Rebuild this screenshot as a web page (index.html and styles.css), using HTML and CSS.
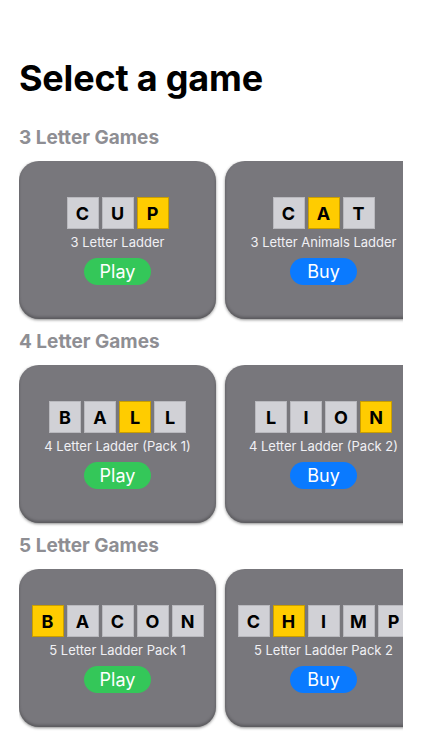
FILE: index.html
```html
<!DOCTYPE html>
<html lang="en">
<head>
  <meta charset="UTF-8">
  <title>Select a game</title>
  <link rel="stylesheet" href="styles.css">
</head>
<body>

  <main class="page">
    <h1>Select a game</h1>

    <section class="group">
      <h2>3 Letter Games</h2>
      <div class="shelf">
        <div class="card">
          <div class="word">
            <span class="tile">C</span><span class="tile">U</span><span class="tile hit">P</span>
          </div>
          <p class="name">3 Letter Ladder</p>
          <button class="btn play">Play</button>
        </div>
        <div class="card">
          <div class="word">
            <span class="tile">C</span><span class="tile hit">A</span><span class="tile">T</span>
          </div>
          <p class="name">3 Letter Animals Ladder</p>
          <button class="btn buy">Buy</button>
        </div>
      </div>
    </section>

    <section class="group">
      <h2>4 Letter Games</h2>
      <div class="shelf">
        <div class="card">
          <div class="word">
            <span class="tile">B</span><span class="tile">A</span><span class="tile hit">L</span><span class="tile">L</span>
          </div>
          <p class="name">4 Letter Ladder (Pack 1)</p>
          <button class="btn play">Play</button>
        </div>
        <div class="card">
          <div class="word">
            <span class="tile">L</span><span class="tile">I</span><span class="tile">O</span><span class="tile hit">N</span>
          </div>
          <p class="name">4 Letter Ladder (Pack 2)</p>
          <button class="btn buy">Buy</button>
        </div>
      </div>
    </section>

    <section class="group">
      <h2>5 Letter Games</h2>
      <div class="shelf">
        <div class="card">
          <div class="word">
            <span class="tile hit">B</span><span class="tile">A</span><span class="tile">C</span><span class="tile">O</span><span class="tile">N</span>
          </div>
          <p class="name">5 Letter Ladder Pack 1</p>
          <button class="btn play">Play</button>
        </div>
        <div class="card">
          <div class="word">
            <span class="tile">C</span><span class="tile hit">H</span><span class="tile">I</span><span class="tile">M</span><span class="tile">P</span>
          </div>
          <p class="name">5 Letter Ladder Pack 2</p>
          <button class="btn buy">Buy</button>
        </div>
      </div>
    </section>
  </main>

</body>
</html>
```

FILE: styles.css
```css
body { font-family: Inter, "Liberation Sans", sans-serif; background: white; margin: 0; padding: 0; }
.page { padding: 57px 19px 0 19px; }

h1 {
  margin: 0 0 25px 0;
  font-size: 36px;
  line-height: 43px;
  font-weight: 700;
  color: black;
  letter-spacing: -0.2px;
}

.group { margin-bottom: 6px; }
.group h2 {
  margin: 0 0 12px 0;
  padding-top: 2px;
  font-size: 19px;
  line-height: 22px;
  font-weight: 700;
  color: #8e8e93;
}

/* horizontal row of cards, cut off on the right */
.shelf {
  display: flex;
  gap: 9px;
  overflow: hidden;
  height: 162px;
}

.card {
  flex: 0 0 197px;
  height: 158px;
  box-sizing: border-box;
  background: #78777c;
  border-radius: 20px;
  display: flex;
  flex-direction: column;
  align-items: center;
  justify-content: center;
  padding-top: 2px;
  box-shadow: inset 0 -2px 3px rgba(0,0,0,0.25), 0 1px 3px rgba(0,0,0,0.45);
}

.word { display: flex; gap: 3px; }
.tile {
  width: 32px;
  height: 32px;
  box-sizing: border-box;
  display: flex;
  align-items: center;
  justify-content: center;
  background: #d1d1d6;
  border: 1px solid #b9b9be;
  font-size: 18px;
  font-weight: 700;
  color: black;
}
.tile.hit { background: #ffcc00; border-color: #c99e00; }

.name {
  margin: 5px 0 8px 0;
  font-size: 13px;
  line-height: 16px;
  color: #f0f0f4;
  white-space: nowrap;
}

.btn {
  width: 67px;
  height: 27px;
  border: none;
  border-radius: 14px;
  font-family: inherit;
  font-size: 18px;
  color: white;
  padding: 0;
  cursor: pointer;
}
.btn.play { background: #34c759; }
.btn.buy { background: #0a7aff; }
```
